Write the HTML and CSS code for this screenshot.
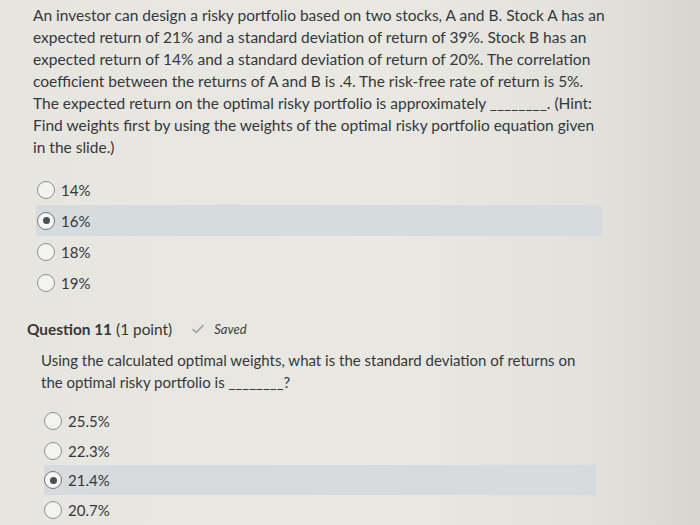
FILE: index.html
```html
<!DOCTYPE html>
<html>
<head>
<meta charset="utf-8">
<link rel="stylesheet" href="styles.css">
</head>
<body>
<div class="page">
  <section class="q q-prev">
    <p class="stem">An investor can design a risky portfolio based on two stocks, A and B. Stock A has an expected return of 21% and a standard deviation of return of 39%. Stock B has an expected return of 14% and a standard deviation of return of 20%. The correlation coefficient between the returns of A and B is .4. The risk-free rate of return is 5%. The expected return on the optimal risky portfolio is approximately ________. (Hint: Find weights first by using the weights of the optimal risky portfolio equation given in the slide.)</p>
    <ul class="options">
      <li class="opt"><span class="radio"></span><span class="label">14%</span></li>
      <li class="opt selected"><span class="radio"></span><span class="label">16%</span></li>
      <li class="opt"><span class="radio"></span><span class="label">18%</span></li>
      <li class="opt"><span class="radio"></span><span class="label">19%</span></li>
    </ul>
  </section>

  <section class="q q-next">
    <div class="qhead">
      <span class="qtitle">Question 11</span> <span class="qpoints">(1 point)</span>
      <span class="saved">
        <svg class="check" width="12" height="10" viewBox="0 0 12 10"><path d="M1 5.5 L4.2 8.5 L11 1.5" fill="none" stroke="#9aa0a3" stroke-width="1.6" stroke-linecap="round" stroke-linejoin="round"/></svg>
        <em>Saved</em>
      </span>
    </div>
    <p class="stem stem2">Using the calculated optimal weights, what is the standard deviation of returns on the optimal risky portfolio is ________?</p>
    <ul class="options options2">
      <li class="opt"><span class="radio"></span><span class="label">25.5%</span></li>
      <li class="opt"><span class="radio"></span><span class="label">22.3%</span></li>
      <li class="opt selected"><span class="radio"></span><span class="label">21.4%</span></li>
      <li class="opt"><span class="radio"></span><span class="label">20.7%</span></li>
    </ul>
  </section>
</div>
</body>
</html>
```

FILE: styles.css
```css
html, body {
  margin: 0;
  padding: 0;
  height: 100%;
}
body {
  background: linear-gradient(90deg, #e6e5df 0%, #e9e8e3 55%, #e2e1dc 85%, #d6d5d0 100%);
  font-family: Lato, "Open Sans", sans-serif;
  color: #34383b;
  overflow: hidden;
}
.page {
  width: 700px;
  height: 525px;
}
.q-prev {
  padding: 4px 0 0 33px;
  width: 575px;
}
.stem {
  margin: 0;
  font-size: 15.5px;
  line-height: 22px;
}
.options {
  list-style: none;
  margin: 16px 0 0 3px;
  padding: 0;
}
.opt {
  display: flex;
  align-items: center;
  height: 31px;
  padding-left: 1px;
  font-size: 15px;
}
.opt.selected {
  background: #d6dbdd;
}
.radio {
  width: 18px;
  height: 18px;
  border-radius: 50%;
  border: 1px solid #8d9194;
  background: #f3f3f0;
  box-sizing: border-box;
  display: flex;
  align-items: center;
  justify-content: center;
  margin-right: 6px;
}
.selected .radio {
  border: 1.5px solid #72777a;
  background: #f6f6f4;
}
.selected .radio::after {
  content: "";
  width: 7px;
  height: 7px;
  border-radius: 50%;
  background: #4a4f52;
}
.q-prev .options {
  width: 566px;
}
.q-next {
  padding: 20px 0 0 27px;
}
.qhead {
  font-size: 15.4px;
  line-height: 22px;
  display: flex;
  align-items: center;
}
.qtitle {
  font-weight: 700;
}
.qpoints {
  margin-left: 4px;
}
.saved {
  display: inline-flex;
  align-items: center;
  margin-left: 20px;
  font-size: 13px;
  color: #3a3f42;
}
.check {
  margin-right: 10px;
}
.stem2 {
  margin: 10px 0 0 14px;
  width: 545px;
  font-size: 15px;
  line-height: 21.5px;
}
.options2 {
  margin: 13px 0 0 17px;
  width: 552px;
}
.options2 .opt {
  height: 29.7px;
  padding-left: 0;
}
.options2 .radio {
  margin-right: 6px;
}
```
